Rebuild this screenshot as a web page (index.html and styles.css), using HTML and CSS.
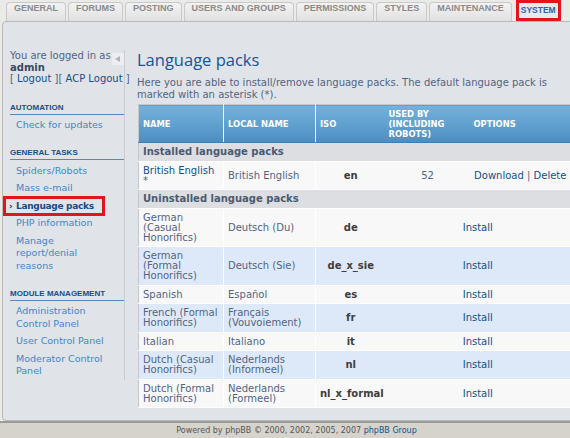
FILE: index.html
```html
<!DOCTYPE html>
<html>
<head>
  <title>Administration Control Panel - Language packs</title>
  <link rel="stylesheet" href="styles.css">
</head>
<body>
  <div class="page">
    <div class="tabs">
      <a class="tab" href="#">General</a>
      <a class="tab" href="#">Forums</a>
      <a class="tab" href="#">Posting</a>
      <a class="tab" href="#">Users and groups</a>
      <a class="tab" href="#">Permissions</a>
      <a class="tab" href="#">Styles</a>
      <a class="tab" href="#">Maintenance</a>
      <a class="tab active" href="#">System</a>
    </div>

    <div class="panel">
      <div class="menu">
        <span class="menu-toggle"></span>
        <p class="logged">You are logged in as<br><b>admin</b><br>[ <a href="#">Logout</a> ][ <a href="#">ACP Logout</a> ]</p>

        <h3>Automation</h3>
        <ul>
          <li><a href="#">Check for updates</a></li>
        </ul>

        <h3>General tasks</h3>
        <ul>
          <li><a href="#">Spiders/Robots</a></li>
          <li><a href="#">Mass e-mail</a></li>
          <li class="active"><a href="#">Language packs</a></li>
          <li><a href="#">PHP information</a></li>
          <li><a href="#">Manage report/denial reasons</a></li>
        </ul>

        <h3>Module management</h3>
        <ul>
          <li><a href="#">Administration Control Panel</a></li>
          <li><a href="#">User Control Panel</a></li>
          <li><a href="#">Moderator Control Panel</a></li>
        </ul>
      </div>

      <div class="main">
        <h1>Language packs</h1>
        <p class="explain">Here you are able to install/remove language packs. The default language pack is marked with an asterisk (*).</p>

        <table class="langs">
          <colgroup>
            <col style="width: 85px">
            <col style="width: 92px">
            <col style="width: 69px">
            <col style="width: 85px">
            <col style="width: 101px">
          </colgroup>
          <thead>
            <tr>
              <th>Name</th>
              <th>Local name</th>
              <th>ISO</th>
              <th>Used by (including robots)</th>
              <th>Options</th>
            </tr>
          </thead>
          <tbody>
            <tr class="section"><td colspan="5">Installed language packs</td></tr>
            <tr class="row1">
              <td><a href="#">British English</a> *</td>
              <td>British English</td>
              <td class="iso">en</td>
              <td class="center">52</td>
              <td class="center"><a href="#">Download</a> | <a href="#">Delete</a></td>
            </tr>
            <tr class="section"><td colspan="5">Uninstalled language packs</td></tr>
            <tr class="row1">
              <td>German (Casual Honorifics)</td>
              <td>Deutsch (Du)</td>
              <td class="iso">de</td>
              <td class="center" colspan="2"><a href="#">Install</a></td>
            </tr>
            <tr class="row2">
              <td>German (Formal Honorifics)</td>
              <td>Deutsch (Sie)</td>
              <td class="iso">de_x_sie</td>
              <td class="center" colspan="2"><a href="#">Install</a></td>
            </tr>
            <tr class="row1">
              <td>Spanish</td>
              <td>Español</td>
              <td class="iso">es</td>
              <td class="center" colspan="2"><a href="#">Install</a></td>
            </tr>
            <tr class="row2">
              <td>French (Formal Honorifics)</td>
              <td>Français (Vouvoiement)</td>
              <td class="iso">fr</td>
              <td class="center" colspan="2"><a href="#">Install</a></td>
            </tr>
            <tr class="row1">
              <td>Italian</td>
              <td>Italiano</td>
              <td class="iso">it</td>
              <td class="center" colspan="2"><a href="#">Install</a></td>
            </tr>
            <tr class="row2">
              <td>Dutch (Casual Honorifics)</td>
              <td>Nederlands (Informeel)</td>
              <td class="iso">nl</td>
              <td class="center" colspan="2"><a href="#">Install</a></td>
            </tr>
            <tr class="row1">
              <td>Dutch (Formal Honorifics)</td>
              <td>Nederlands (Formeel)</td>
              <td class="iso">nl_x_formal</td>
              <td class="center" colspan="2"><a href="#">Install</a></td>
            </tr>
          </tbody>
        </table>
      </div>
    </div>

    <div class="footer">Powered by phpBB &copy; 2000, 2002, 2005, 2007 <a href="#">phpBB Group</a></div>
  </div>
</body>
</html>
```

FILE: styles.css
```css
html {
  overflow: hidden;
}

body {
  margin: 0;
  background-color: #eaeae8;
  font-family: "DejaVu Sans", Verdana, sans-serif;
  font-size: 10px;
  color: #536482;
}

a {
  color: #105289;
  text-decoration: none;
}

.page {
  width: 593px;
  padding-top: 2px;
}

/* top tabs */
.tabs {
  display: flex;
  align-items: flex-end;
  gap: 2px;
  height: 19px;
  padding-left: 6px;
}

.tab {
  height: 18px;
  line-height: 18px;
  padding: 0 7px;
  border: 1px solid #c9c9c9;
  border-bottom: none;
  border-radius: 4px 4px 0 0;
  background: linear-gradient(#f2f2f2, #e1e1e1);
  font: bold 9px "Liberation Sans", Arial, sans-serif;
  text-transform: uppercase;
  color: #8a8a8a;
}

.tab.active {
  height: 15px;
  margin-left: 2px;
  line-height: 15px;
  padding: 0 2px;
  border: 3px solid #e2141c;
  border-radius: 0;
  background: #e6e9ee;
  font-size: 8.5px;
  color: #2b62a8;
}

/* main box */
.panel {
  display: flex;
  align-items: flex-start;
  margin-left: 2px;
  padding: 28px 0 12px;
  border: 1px solid #b9b9b9;
  border-radius: 4px;
  background-color: #e0e3e8;
}

.menu {
  position: relative;
  flex: none;
  width: 121px;
  border-right: 1px solid #c8ccd2;
}

.menu-toggle {
  position: absolute;
  top: 3px;
  right: 0;
  width: 12px;
  height: 12px;
  background-color: #eceef2;
}

.menu-toggle::after {
  content: "";
  position: absolute;
  top: 3px;
  left: 3px;
  border-top: 3px solid transparent;
  border-bottom: 3px solid transparent;
  border-right: 5px solid #b0b4ba;
}

.logged {
  margin: 0 0 18px;
  padding-left: 7px;
  line-height: 11.5px;
  white-space: nowrap;
}

.logged b {
  color: #3a4a63;
}

.menu h3 {
  margin: 14px 0 0 7px;
  padding-bottom: 1px;
  border-bottom: 1px solid #5687be;
  font: bold 8px/10px "Liberation Sans", Arial, sans-serif;
  text-transform: uppercase;
  color: #194d88;
}

.menu ul {
  list-style: none;
  margin: 2px 0 0;
  padding: 0 10px 0 13px;
}

.menu li {
  padding: 2.75px 0 2.25px;
  font-size: 9.5px;
  line-height: 12.5px;
}

.menu li a {
  color: #3f87c8;
}

.menu li.active a {
  display: inline-block;
  margin: -1px 0 -1px -10px;
  padding: 1px 8px 1px 3px;
  outline: 3px solid #e2141c;
  font-size: 9px;
  font-weight: bold;
  letter-spacing: -0.3px;
  line-height: 12.5px;
  color: #1b4a82;
}

.menu li.active a::before {
  content: "\203A";
  display: inline-block;
  width: 7px;
  color: #333;
}

.main {
  flex: 1;
  padding-left: 12px;
}

.main h1 {
  margin: 0;
  font: normal 16.5px/20px "Open Sans", "DejaVu Sans", sans-serif;
  color: #175399;
}

.explain {
  margin: 7px 0 4px;
  line-height: 11.5px;
  width: 440px;
}

/* language table */
.langs {
  width: 432px;
  margin-left: 1px;
  table-layout: fixed;
  border-collapse: collapse;
  border: 1px solid #c4c8cd;
  line-height: 10px;
}

.langs th {
  padding: 3.5px 4px;
  background: linear-gradient(#74b0da, #5f9fcf 55%, #4d8cc0);
  border-bottom: 1px solid #3f7db5;
  font-size: 8.4px;
  font-weight: bold;
  text-align: left;
  text-transform: uppercase;
  color: #fff;
}

.langs td {
  padding: 4px 3px 3.5px 4px;
  border-bottom: 1px solid #fff;
  vertical-align: middle;
}

.langs th:nth-child(-n+2),
.langs .row1 td:nth-child(-n+2),
.langs .row2 td:nth-child(-n+2) {
  border-right: 1px solid #fff;
}

.langs .section td {
  background-color: #dcdee2;
  font-weight: bold;
  color: #4a5a72;
}

.row1 td {
  background-color: #f8f8f9;
}

.row2 td {
  background-color: #dde9f9;
}

.langs .iso {
  text-align: center;
  font-weight: bold;
  color: #3d3d3d;
}

.langs .center {
  text-align: center;
}

.footer {
  border-top: 2px solid #9d9b97;
  background-color: #d6d3cc;
  font-size: 8px;
  line-height: 16px;
  text-align: center;
  color: #555;
}
```
